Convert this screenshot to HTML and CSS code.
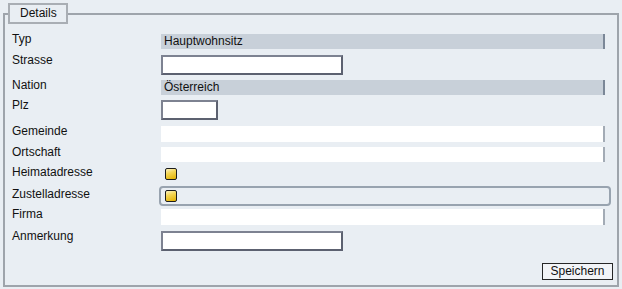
FILE: index.html
```html
<!DOCTYPE html>
<html lang="de">
<head>
<meta charset="utf-8">
<title>Details</title>
<link rel="stylesheet" href="styles.css">
</head>
<body>
<fieldset class="details">
  <legend class="details-legend">Details</legend>
  <div class="form">
    <div class="label">Typ</div>
    <div class="field"><div class="bar bar-ro">Hauptwohnsitz</div></div>

    <div class="label">Strasse</div>
    <div class="field"><div class="input input-wide"></div></div>

    <div class="label">Nation</div>
    <div class="field"><div class="bar bar-ro">Österreich</div></div>

    <div class="label">Plz</div>
    <div class="field"><div class="input input-short"></div></div>

    <div class="label">Gemeinde</div>
    <div class="field"><div class="bar bar-white bar-16"></div></div>

    <div class="label">Ortschaft</div>
    <div class="field"><div class="bar bar-white"></div></div>

    <div class="label">Heimatadresse</div>
    <div class="field"><span class="check check-plain"></span></div>

    <div class="label label-focus">Zustelladresse</div>
    <div class="field"><div class="focus-box"><span class="check"></span></div></div>

    <div class="label">Firma</div>
    <div class="field"><div class="bar bar-white bar-16"></div></div>

    <div class="label">Anmerkung</div>
    <div class="field"><div class="input input-wide"></div></div>
  </div>
  <div class="actions"><button class="btn" type="button">Speichern</button></div>
</fieldset>
</body>
</html>
```
FILE: styles.css
```css
html, body {
  margin: 0;
  padding: 0;
  background: #e9eef3;
}
body {
  font-family: "Liberation Sans", Arial, sans-serif;
  font-size: 12px;
  color: #111;
}
.details {
  margin: 3px 3px 3px 3px;
  padding: 10px 4px 5px 4px;
  border: 2px solid #9ea4ab;
  min-width: 0;
}
.details-legend {
  padding: 1px 9px 1px 10px;
  line-height: 15px;
  border: 2px solid #a9aeb4;
  background: #e9eef3;
  color: #111;
  margin-left: -1px;
}
.form {
  display: grid;
  grid-template-columns: 149px 1fr;
  grid-template-rows: 21px 25px 20px 26px 21px 20px 19px 23px 22px 20px;
  padding-left: 3px;
}
.label {
  line-height: 15px;
  margin-top: -2px;
  white-space: nowrap;
}
.label-focus {
  margin-top: 1px;
}
.field {
  display: flex;
  align-items: flex-start;
}
.bar {
  box-sizing: border-box;
  width: 444px;
  height: 15px;
  line-height: 15px;
  padding-left: 3px;
  border-right: 2px solid #7b8797;
}
.bar-16 {
  height: 16px;
}
.bar-ro {
  background: #c8d0d9;
}
.bar-white {
  background: #ffffff;
  border-right-color: #a3abb5;
}
.input {
  box-sizing: border-box;
  height: 20px;
  background: #fff;
  border: 2px solid;
  border-color: #7d8291 #5c6170 #5c6170 #7d8291;
}
.input-wide {
  width: 182px;
}
.input-short {
  width: 57px;
}
.check {
  display: block;
  box-sizing: border-box;
  width: 12px;
  height: 12px;
  border: 1px solid #1c1c1c;
  border-radius: 2px;
  background: linear-gradient(160deg, #fbf3c4 0%, #f4d552 40%, #e2b000 100%);
}
.check-plain {
  margin: 1px 0 0 4px;
}
.focus-box {
  box-sizing: border-box;
  width: 452px;
  height: 20px;
  margin-left: -2px;
  padding: 2px 0 0 4px;
  border: 2px solid #98a3af;
  border-radius: 4px;
}
.actions {
  display: flex;
  justify-content: flex-end;
  margin-top: 12px;
}
.btn {
  box-sizing: border-box;
  width: 71px;
  height: 17px;
  padding: 0;
  font-family: "Liberation Sans", Arial, sans-serif;
  font-size: 12px;
  line-height: 15px;
  color: #111;
  background: #f2f4f7;
  border: 1px solid #262626;
  border-radius: 0;
}
```
